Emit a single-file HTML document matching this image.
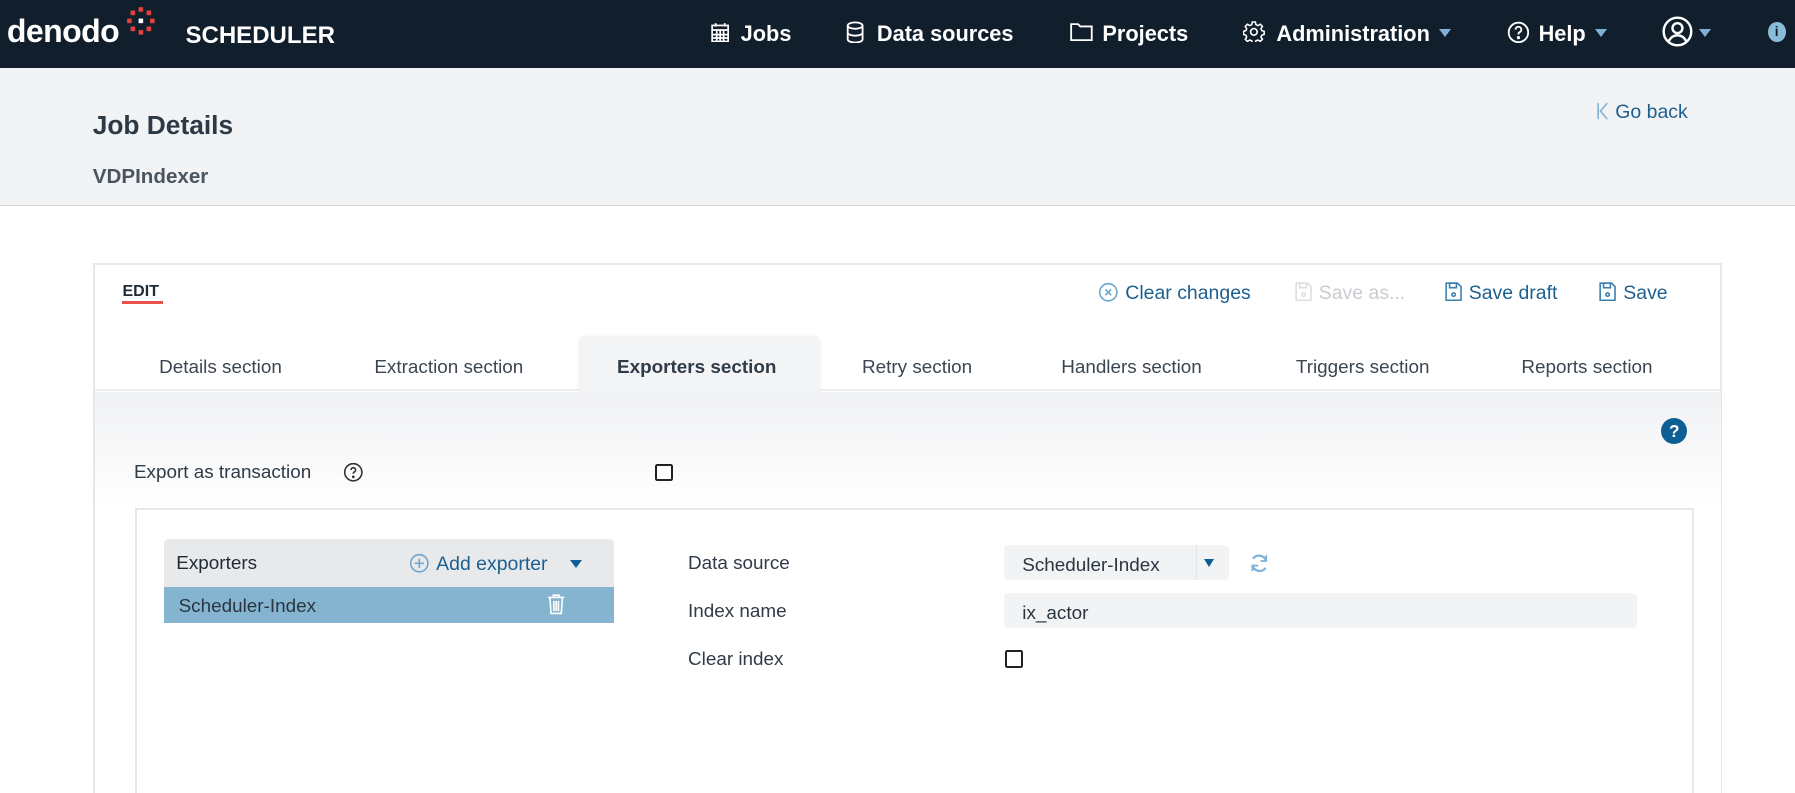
<!DOCTYPE html>
<html><head><meta charset="utf-8">
<style>
html{margin:0;padding:0;width:1795px;height:793px;overflow:hidden;}
body{margin:0;padding:0;width:1568px;height:693px;overflow:hidden;zoom:1.14477;font-family:"Liberation Sans",sans-serif;background:#fff;position:relative;color:#3a4652;}
.a{position:absolute;white-space:nowrap;}
.hdr{position:absolute;left:0;top:0;width:1568px;height:59px;background:#111e2b;}
.nav{color:#fff;font-weight:bold;font-size:19px;top:18px;}
.sub{position:absolute;left:0;top:59px;width:1568px;height:120px;background:#f2f3f5;border-bottom:1px solid #d6d8da;}
.blue{color:#1d5f8f;}
.tab{font-size:16.5px;color:#3a4652;top:312px;}
.lbl{font-size:16.5px;color:#2f3b47;}
.cb{position:absolute;width:12px;height:12px;border:2px solid #222;border-radius:2px;background:#fff;}
</style></head><body>
<div class="hdr"></div>
<div class="a" style="left:6px;top:11px;color:#fff;font-size:28px;font-weight:bold;letter-spacing:-0.5px">denodo</div>
<svg class="a" style="left:110px;top:5px" width="26" height="26" viewBox="0 0 26 26"><g fill="#e0443a"><rect x="11" y="1" width="4" height="4"/><rect x="4" y="4" width="4" height="4"/><rect x="18" y="4" width="4" height="4"/><rect x="1" y="11" width="4" height="4"/><rect x="21" y="11" width="4" height="4"/><rect x="4" y="18" width="4" height="4"/><rect x="18" y="18" width="4" height="4"/><rect x="11" y="21" width="4" height="4"/></g><rect x="11" y="11" width="4" height="4" fill="#fff"/></svg>
<div class="a" style="left:162px;top:19px;color:#fff;font-size:21px;font-weight:bold">SCHEDULER</div>

<svg class="a" style="left:621px;top:19px" width="16" height="18" viewBox="0 0 16 18" fill="none" stroke="#fff" stroke-width="1.5"><rect x="1" y="3" width="14" height="14"/><path d="M1 7h14M1 11h14M1 14h14M5 7v10M8 7v10M11 7v10M4 1v3M12 1v3"/></svg>
<div class="a nav" style="left:647px">Jobs</div>
<svg class="a" style="left:739px;top:18px" width="16" height="20" viewBox="0 0 16 20" fill="none" stroke="#fff" stroke-width="1.6"><ellipse cx="8" cy="4" rx="6.5" ry="2.8"/><path d="M1.5 4v12c0 1.6 2.9 2.8 6.5 2.8s6.5-1.2 6.5-2.8V4M1.5 10c0 1.6 2.9 2.8 6.5 2.8s6.5-1.2 6.5-2.8"/></svg>
<div class="a nav" style="left:766px">Data sources</div>
<svg class="a" style="left:935px;top:20px" width="20" height="16" viewBox="0 0 20 16" fill="none" stroke="#fff" stroke-width="1.6"><path d="M1 1h6l2 2h10v12H1z"/></svg>
<div class="a nav" style="left:963px">Projects</div>
<svg class="a" style="left:1086px;top:18px" width="19" height="19" viewBox="0 0 20 20" fill="none" stroke="#fff" stroke-width="1.5"><circle cx="10" cy="10" r="3"/><path d="M8.5 1.5h3l.5 2.5 2 1 2.2-1.4 2.1 2.1L16.9 8l.8 1.8 2.3.7v3l-2.3.7-.8 1.8 1.4 2.2-2.1 2.1-2.2-1.4-2 .8-.5 2.5h-3L8 19.7l-2-.8-2.2 1.4-2.1-2.1L3.1 16l-.8-1.8L0 13.5v-3l2.3-.7.8-1.8L1.7 5.7l2.1-2.1L6 5l2-1z" transform="scale(.95) translate(.5 -.5)"/></svg>
<div class="a nav" style="left:1115px">Administration</div>
<div class="a" style="left:1257px;top:25px;width:0;height:0;border-left:6px solid transparent;border-right:6px solid transparent;border-top:7px solid #7fb2d6"></div>
<svg class="a" style="left:1316px;top:18px" width="20" height="20" viewBox="0 0 20 20" fill="none" stroke="#fff" stroke-width="1.6"><circle cx="10" cy="10" r="8.5"/><path d="M7.5 7.5a2.5 2.5 0 1 1 3.5 2.3c-.8.4-1 1-1 2"/><circle cx="10" cy="14.5" r=".6" fill="#fff"/></svg>
<div class="a nav" style="left:1344px">Help</div>
<div class="a" style="left:1393px;top:25px;width:0;height:0;border-left:6px solid transparent;border-right:6px solid transparent;border-top:7px solid #7fb2d6"></div>
<svg class="a" style="left:1452px;top:14px" width="27" height="27" viewBox="0 0 28 28" fill="none" stroke="#fff" stroke-width="2.2"><circle cx="14" cy="14" r="12.5"/><circle cx="14" cy="11" r="4.5"/><path d="M6 23c2-4 5-5.5 8-5.5s6 1.5 8 5.5"/></svg>
<div class="a" style="left:1484px;top:25px;width:0;height:0;border-left:6px solid transparent;border-right:6px solid transparent;border-top:7px solid #7fb2d6"></div>
<div class="a" style="left:1544px;top:19px;width:16px;height:18px;border-radius:50%;background:#8cbbd9;color:#111e2b;font-size:12px;font-weight:bold;text-align:center;line-height:18px">i</div>

<div class="sub"></div>
<div class="a" style="left:81px;top:96px;font-size:23px;font-weight:bold;color:#2d3a45">Job Details</div>
<div class="a" style="left:81px;top:144px;font-size:18px;font-weight:bold;color:#4a5560">VDPIndexer</div>
<svg class="a" style="left:1395px;top:89px" width="10" height="16" viewBox="0 0 10 16" fill="none" stroke="#7fb2d6" stroke-width="1.4"><path d="M1 1v14M9 1L3 8l6 7"/></svg>
<div class="a blue" style="left:1411px;top:88px;font-size:17px">Go back</div>

<div class="a" style="left:81px;top:230px;width:1420px;height:480px;border:2px solid #e6e7e8;background:#fff"></div>
<div class="a" style="left:107px;top:246px;font-size:14px;font-weight:bold;color:#1f2a36">EDIT</div>
<div class="a" style="left:107px;top:263px;width:35px;height:3px;background:#e9524a"></div>

<svg class="a" style="left:959px;top:246px" width="18" height="18" viewBox="0 0 18 18" fill="none" stroke="#6fa6cc" stroke-width="1.4"><circle cx="9" cy="9" r="7.5"/><path d="M6.5 6.5l5 5M11.5 6.5l-5 5"/></svg>
<div class="a blue" style="left:983px;top:246px;font-size:17px">Clear changes</div>
<svg class="a" style="left:1131px;top:246px" width="15" height="17" viewBox="0 0 15 17" fill="none" stroke="#dcdfe2" stroke-width="1.4"><path d="M1 1h10l3 3v12H1z"/><rect x="4" y="1" width="6" height="4"/><circle cx="7.5" cy="11" r="1.5"/></svg>
<div class="a" style="left:1152px;top:246px;font-size:17px;color:#c8ccd0">Save as...</div>
<svg class="a" style="left:1262px;top:246px" width="15" height="17" viewBox="0 0 15 17" fill="none" stroke="#3d80b0" stroke-width="1.4"><path d="M1 1h10l3 3v12H1z"/><rect x="4" y="1" width="6" height="4"/><circle cx="7.5" cy="11" r="1.5"/></svg>
<div class="a blue" style="left:1283px;top:246px;font-size:17px">Save draft</div>
<svg class="a" style="left:1397px;top:246px" width="15" height="17" viewBox="0 0 15 17" fill="none" stroke="#3d80b0" stroke-width="1.4"><path d="M1 1h10l3 3v12H1z"/><rect x="4" y="1" width="6" height="4"/><circle cx="7.5" cy="11" r="1.5"/></svg>
<div class="a blue" style="left:1418px;top:246px;font-size:17px">Save</div>

<div class="a" style="left:83px;top:342px;width:1420px;height:360px;background:linear-gradient(#f0f1f3,#fff 100px)"></div>
<div class="a" style="left:83px;top:339px;width:1420px;height:3px;background:linear-gradient(#fff,#e4e6e8)"></div>
<div class="a" style="left:506px;top:295px;width:210px;height:48px;background:#f3f4f6;border-radius:4px 4px 0 0;box-shadow:0 -1px 3px rgba(0,0,0,.08)"></div>
<div class="a tab" style="left:139px">Details section</div>
<div class="a tab" style="left:327px">Extraction section</div>
<div class="a tab" style="left:539px;font-weight:bold;color:#2f3b47">Exporters section</div>
<div class="a tab" style="left:753px">Retry section</div>
<div class="a tab" style="left:927px">Handlers section</div>
<div class="a tab" style="left:1132px">Triggers section</div>
<div class="a tab" style="left:1329px">Reports section</div>

<div class="a" style="left:1451px;top:365px;width:23px;height:23px;border-radius:50%;background:#0d5e94;color:#fff;font-weight:bold;font-size:15px;text-align:center;line-height:23px">?</div>
<div class="a lbl" style="left:117px;top:404px">Export as transaction</div>
<svg class="a" style="left:300px;top:404px" width="18" height="18" viewBox="0 0 18 18" fill="none" stroke="#333" stroke-width="1.4"><circle cx="9" cy="9" r="7.5"/><path d="M7 7a2 2 0 1 1 2.8 1.8c-.6.3-.8.8-.8 1.5"/><circle cx="9" cy="13" r=".5" fill="#333"/></svg>
<div class="cb" style="left:572px;top:405px"></div>

<div class="a" style="left:118px;top:444px;width:1358px;height:280px;border:2px solid #e6e7e8;background:#fff"></div>
<div class="a" style="left:143px;top:471px;width:393px;height:42px;background:#e8e9eb;border-radius:4px 4px 0 0"></div>
<div class="a lbl" style="left:154px;top:483px;color:#1f2a36">Exporters</div>
<svg class="a" style="left:357px;top:483px" width="18" height="18" viewBox="0 0 18 18" fill="none" stroke="#6fa6cc" stroke-width="1.4"><circle cx="9" cy="9" r="7.5"/><path d="M9 5v8M5 9h8"/></svg>
<div class="a blue" style="left:381px;top:483px;font-size:17px">Add exporter</div>
<div class="a" style="left:498px;top:489px;width:0;height:0;border-left:6px solid transparent;border-right:6px solid transparent;border-top:7px solid #0d5e94"></div>
<div class="a" style="left:143px;top:513px;width:393px;height:31px;background:#84b4cf"></div>
<div class="a lbl" style="left:156px;top:521px;color:#2a3540">Scheduler-Index</div>
<svg class="a" style="left:478px;top:519px" width="16" height="18" viewBox="0 0 16 18" fill="none" stroke="#fff" stroke-width="1.4"><path d="M1 3h14M5.5 3V1h5v2M2.5 3l1 14h9l1-14M6 6v9M8 6v9M10 6v9"/></svg>

<div class="a lbl" style="left:601px;top:483px">Data source</div>
<div class="a lbl" style="left:601px;top:525px">Index name</div>
<div class="a lbl" style="left:601px;top:567px">Clear index</div>
<div class="a" style="left:877px;top:476px;width:197px;height:31px;background:#f2f3f5;border-radius:4px"></div>
<div class="a" style="left:1045px;top:476px;width:1px;height:31px;background:#e2e4e6"></div>
<div class="a lbl" style="left:893px;top:485px;color:#2a3540">Scheduler-Index</div>
<div class="a" style="left:1052px;top:488px;width:0;height:0;border-left:5px solid transparent;border-right:5px solid transparent;border-top:7px solid #0d5e94"></div>
<svg class="a" style="left:1091px;top:483px" width="18" height="18" viewBox="0 0 18 18" fill="none" stroke="#7fb2d6" stroke-width="2"><path d="M15 7A6.5 6.5 0 0 0 3.5 5M3 11a6.5 6.5 0 0 0 11.5 2"/><path d="M15 2v5h-5M3 16v-5h5" stroke-width="1.6"/></svg>
<div class="a" style="left:877px;top:518px;width:553px;height:31px;background:#f2f3f5;border-radius:4px"></div>
<div class="a lbl" style="left:893px;top:527px;color:#2a3540">ix_actor</div>
<div class="cb" style="left:878px;top:568px"></div>
</body></html>
